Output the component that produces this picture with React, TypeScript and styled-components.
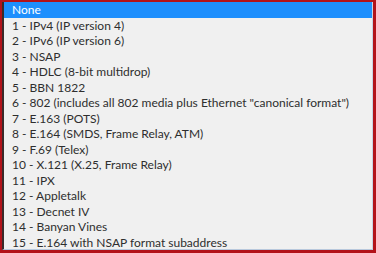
import React from "react";
import styled, { createGlobalStyle } from "styled-components";

const Global = createGlobalStyle`
  html, body { margin: 0; padding: 0; background: #f0f0f0; }
  body { font-family: Lato, "Open Sans", sans-serif; }
`;

const Frame = styled.div`
  width: 376px;
  height: 253px;
  box-sizing: border-box;
  border-style: solid;
  border-color: #b3121a;
  border-width: 2px 3px 3px 2px;
  background: #f0f0f0;
  overflow: hidden;
`;

const ListBox = styled.ul`
  list-style: none;
  margin: 0;
  padding: 0;
  height: 100%;
  box-sizing: border-box;
  border-left: 2px solid #3a2a2a;
  border-right: 1px solid #c8d4e4;
  border-bottom: 1px solid #b8c8dc;
  background: #f0f0f0;
`;

const Option = styled.li<{ $selected?: boolean }>`
  font-family: Lato, "Open Sans", sans-serif;
  font-size: 12px;
  line-height: 15.5px;
  padding-left: 8px;
  white-space: nowrap;
  color: ${(p) => (p.$selected ? "#ffffff" : "#2e2e2e")};
  background: ${(p) => (p.$selected ? "#1e8ffd" : "transparent")};
`;

const items = [
  "None",
  "1 - IPv4 (IP version 4)",
  "2 - IPv6 (IP version 6)",
  "3 - NSAP",
  "4 - HDLC (8-bit multidrop)",
  "5 - BBN 1822",
  '6 - 802 (includes all 802 media plus Ethernet "canonical format")',
  "7 - E.163 (POTS)",
  "8 - E.164 (SMDS, Frame Relay, ATM)",
  "9 - F.69 (Telex)",
  "10 - X.121 (X.25, Frame Relay)",
  "11 - IPX",
  "12 - Appletalk",
  "13 - Decnet IV",
  "14 - Banyan Vines",
  "15 - E.164 with NSAP format subaddress",
];

export default function App() {
  return (
    <>
      <Global />
      <Frame>
        <ListBox>
          {items.map((t, i) => (
            <Option key={t} $selected={i === 0}>
              {t}
            </Option>
          ))}
        </ListBox>
      </Frame>
    </>
  );
}
